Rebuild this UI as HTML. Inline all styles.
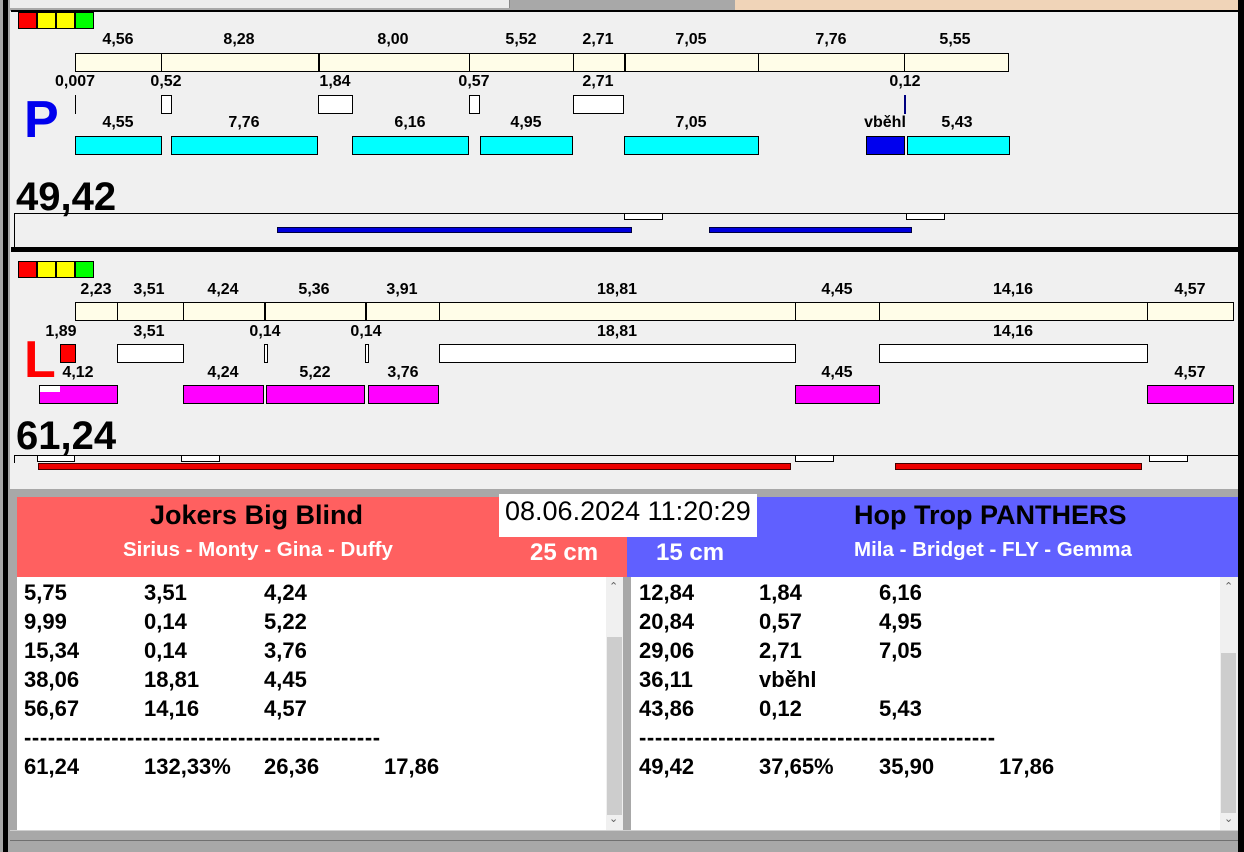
<!DOCTYPE html>
<html><head><meta charset="utf-8"><style>
*{margin:0;padding:0;box-sizing:border-box}
body{width:1244px;height:852px;background:#f0f0f0;position:relative;overflow:hidden;font-family:"Liberation Sans",Arial,sans-serif}
div{position:absolute}
.b{border:1px solid #000}
.c{background:#fffde8}.w{background:#fff}.cy{background:#00ffff}.m{background:#ff00ff}
.t{font-weight:bold;font-size:16px;transform:translateX(-50%);white-space:nowrap;line-height:16px}
.r{font-weight:bold;font-size:22px;line-height:22px;white-space:nowrap}
.d{letter-spacing:0.6px}
</style></head><body>
<!-- top strip -->
<div style="left:0;top:0;width:1244px;height:11px;background:#a8a8a8"></div>
<div style="left:8px;top:0;width:502px;height:8px;background:#ececec;border-right:1px solid #888"></div>
<div style="left:735px;top:0;width:509px;height:11px;background:#f0d4b8"></div>
<div style="left:0;top:0;width:10px;height:852px;background:#a8a8a8"></div>
<div style="left:3px;top:0;width:5px;height:852px;background:#000"></div>
<div style="left:1238px;top:0;width:6px;height:852px;background:#000"></div>
<div style="left:11px;top:10px;width:1227px;height:2px;background:#000"></div>
<!-- P panel -->
<div style="left:18px;top:12px;width:19px;height:17px;background:#f00;border:1px solid #000"></div>
<div style="left:37px;top:12px;width:19px;height:17px;background:#ff0;border:1px solid #000"></div>
<div style="left:56px;top:12px;width:19px;height:17px;background:#ff0;border:1px solid #000"></div>
<div style="left:75px;top:12px;width:19px;height:17px;background:#0f0;border:1px solid #000"></div>

<div class="b c" style="left:75px;top:53px;width:87px;height:19px"></div>
<div class="b c" style="left:161px;top:53px;width:158px;height:19px"></div>
<div class="b c" style="left:318px;top:53px;width:152px;height:19px;border-left-width:2px"></div>
<div class="b c" style="left:469px;top:53px;width:105px;height:19px"></div>
<div class="b c" style="left:573px;top:53px;width:52px;height:19px"></div>
<div class="b c" style="left:624px;top:53px;width:135px;height:19px;border-left-width:2px"></div>
<div class="b c" style="left:758px;top:53px;width:147px;height:19px"></div>
<div class="b c" style="left:904px;top:53px;width:105px;height:19px"></div>
<div class="t" style="left:118px;top:32px">4,56</div>
<div class="t" style="left:239px;top:32px">8,28</div>
<div class="t" style="left:393px;top:32px">8,00</div>
<div class="t" style="left:521px;top:32px">5,52</div>
<div class="t" style="left:598px;top:32px">2,71</div>
<div class="t" style="left:691px;top:32px">7,05</div>
<div class="t" style="left:831px;top:32px">7,76</div>
<div class="t" style="left:955px;top:32px">5,55</div>

<div style="left:75px;top:95px;width:1px;height:19px;background:#000"></div>
<div class="b w" style="left:161px;top:95px;width:11px;height:19px"></div>
<div class="b w" style="left:318px;top:95px;width:35px;height:19px"></div>
<div class="b w" style="left:469px;top:95px;width:11px;height:19px"></div>
<div class="b w" style="left:573px;top:95px;width:51px;height:19px"></div>
<div style="left:904px;top:95px;width:2px;height:19px;background:#000080"></div>
<div class="t" style="left:75px;top:74px">0,007</div>
<div class="t" style="left:166px;top:74px">0,52</div>
<div class="t" style="left:335px;top:74px">1,84</div>
<div class="t" style="left:474px;top:74px">0,57</div>
<div class="t" style="left:598px;top:74px">2,71</div>
<div class="t" style="left:905px;top:74px">0,12</div>

<div class="b cy" style="left:75px;top:136px;width:87px;height:19px"></div>
<div class="b cy" style="left:171px;top:136px;width:147px;height:19px"></div>
<div class="b cy" style="left:352px;top:136px;width:117px;height:19px"></div>
<div class="b cy" style="left:480px;top:136px;width:93px;height:19px"></div>
<div class="b cy" style="left:624px;top:136px;width:135px;height:19px"></div>
<div class="b" style="left:866px;top:136px;width:39px;height:19px;background:#0000ee"></div>
<div class="b cy" style="left:907px;top:136px;width:103px;height:19px"></div>
<div class="t" style="left:118px;top:115px">4,55</div>
<div class="t" style="left:244px;top:115px">7,76</div>
<div class="t" style="left:410px;top:115px">6,16</div>
<div class="t" style="left:526px;top:115px">4,95</div>
<div class="t" style="left:691px;top:115px">7,05</div>
<div class="t" style="left:885px;top:115px">vběhl</div>
<div class="t" style="left:957px;top:115px">5,43</div>

<div style="left:24px;top:92px;font-size:52px;font-weight:bold;color:#0000ee;line-height:56px">P</div>
<div style="left:16px;top:175px;font-size:40px;font-weight:bold;line-height:44px">49,42</div>
<div style="left:14px;top:213px;width:1224px;height:1px;background:#000"></div>
<div style="left:14px;top:213px;width:1px;height:34px;background:#000"></div>
<div class="b w" style="left:624px;top:213px;width:39px;height:7px"></div>
<div class="b w" style="left:906px;top:213px;width:39px;height:7px"></div>
<div style="left:277px;top:227px;width:355px;height:6px;background:#0000dd;border:1px solid #000040"></div>
<div style="left:709px;top:227px;width:203px;height:6px;background:#0000dd;border:1px solid #000040"></div>
<div style="left:11px;top:247px;width:1227px;height:5px;background:#000"></div>

<!-- L panel -->
<div style="left:18px;top:261px;width:19px;height:17px;background:#f00;border:1px solid #000"></div>
<div style="left:37px;top:261px;width:19px;height:17px;background:#ff0;border:1px solid #000"></div>
<div style="left:56px;top:261px;width:19px;height:17px;background:#ff0;border:1px solid #000"></div>
<div style="left:75px;top:261px;width:19px;height:17px;background:#0f0;border:1px solid #000"></div>

<div class="b c" style="left:75px;top:302px;width:43px;height:19px"></div>
<div class="b c" style="left:117px;top:302px;width:67px;height:19px"></div>
<div class="b c" style="left:183px;top:302px;width:82px;height:19px"></div>
<div class="b c" style="left:264px;top:302px;width:102px;height:19px;border-left-width:2px"></div>
<div class="b c" style="left:365px;top:302px;width:75px;height:19px;border-left-width:2px"></div>
<div class="b c" style="left:439px;top:302px;width:357px;height:19px"></div>
<div class="b c" style="left:795px;top:302px;width:85px;height:19px"></div>
<div class="b c" style="left:879px;top:302px;width:269px;height:19px"></div>
<div class="b c" style="left:1147px;top:302px;width:87px;height:19px"></div>
<div class="t" style="left:96px;top:282px">2,23</div>
<div class="t" style="left:149px;top:282px">3,51</div>
<div class="t" style="left:223px;top:282px">4,24</div>
<div class="t" style="left:314px;top:282px">5,36</div>
<div class="t" style="left:402px;top:282px">3,91</div>
<div class="t" style="left:617px;top:282px">18,81</div>
<div class="t" style="left:837px;top:282px">4,45</div>
<div class="t" style="left:1013px;top:282px">14,16</div>
<div class="t" style="left:1190px;top:282px">4,57</div>

<div class="b" style="left:60px;top:344px;width:16px;height:19px;background:#f00"></div>
<div class="b w" style="left:117px;top:344px;width:67px;height:19px"></div>
<div class="b w" style="left:264px;top:344px;width:4px;height:19px"></div>
<div class="b w" style="left:365px;top:344px;width:4px;height:19px"></div>
<div class="b w" style="left:439px;top:344px;width:357px;height:19px"></div>
<div class="b w" style="left:879px;top:344px;width:269px;height:19px"></div>
<div class="t" style="left:61px;top:324px">1,89</div>
<div class="t" style="left:149px;top:324px">3,51</div>
<div class="t" style="left:265px;top:324px">0,14</div>
<div class="t" style="left:366px;top:324px">0,14</div>
<div class="t" style="left:617px;top:324px">18,81</div>
<div class="t" style="left:1013px;top:324px">14,16</div>

<div class="b m" style="left:39px;top:385px;width:79px;height:19px"></div>
<div style="left:40px;top:386px;width:20px;height:6px;background:#fff"></div>
<div class="b m" style="left:183px;top:385px;width:81px;height:19px"></div>
<div class="b m" style="left:266px;top:385px;width:99px;height:19px"></div>
<div class="b m" style="left:368px;top:385px;width:71px;height:19px"></div>
<div class="b m" style="left:795px;top:385px;width:85px;height:19px"></div>
<div class="b m" style="left:1147px;top:385px;width:87px;height:19px"></div>
<div style="left:24px;top:334px;font-size:52px;font-weight:bold;color:#f00;line-height:52px">L</div>
<div class="t" style="left:78px;top:365px">4,12</div>
<div class="t" style="left:223px;top:365px">4,24</div>
<div class="t" style="left:315px;top:365px">5,22</div>
<div class="t" style="left:403px;top:365px">3,76</div>
<div class="t" style="left:837px;top:365px">4,45</div>
<div class="t" style="left:1190px;top:365px">4,57</div>

<div style="left:16px;top:414px;font-size:40px;font-weight:bold;line-height:44px">61,24</div>
<div style="left:14px;top:455px;width:1224px;height:1px;background:#000"></div>
<div style="left:14px;top:455px;width:1px;height:8px;background:#000"></div>
<div class="b w" style="left:37px;top:455px;width:38px;height:7px"></div>
<div class="b w" style="left:181px;top:455px;width:39px;height:7px"></div>
<div class="b w" style="left:795px;top:455px;width:39px;height:7px"></div>
<div class="b w" style="left:1149px;top:455px;width:39px;height:7px"></div>
<div style="left:38px;top:463px;width:753px;height:7px;background:#e00;border:1px solid #400"></div>
<div style="left:895px;top:463px;width:247px;height:7px;background:#e00;border:1px solid #400"></div>
<div style="left:10px;top:489px;width:1228px;height:8px;background:#a8a8a8"></div>

<!-- bottom -->
<div style="left:10px;top:497px;width:7px;height:355px;background:#a8a8a8"></div>
<div style="left:17px;top:497px;width:610px;height:80px;background:#ff6060"></div>
<div style="left:627px;top:497px;width:611px;height:80px;background:#6060ff"></div>
<div style="left:150px;top:500px;font-size:27px;font-weight:bold;line-height:30px">Jokers Big Blind</div>
<div style="left:123px;top:538px;font-size:20.5px;font-weight:bold;color:#fff;line-height:23px">Sirius - Monty - Gina - Duffy</div>
<div style="left:854px;top:500px;font-size:27px;font-weight:bold;line-height:30px">Hop Trop PANTHERS</div>
<div style="left:854px;top:538px;font-size:20.5px;font-weight:bold;color:#fff;line-height:23px">Mila - Bridget - FLY - Gemma</div>
<div style="left:530px;top:539px;font-size:24px;font-weight:bold;color:#fff;line-height:27px">25 cm</div>
<div style="left:656px;top:539px;font-size:24px;font-weight:bold;color:#fff;line-height:27px">15 cm</div>
<div style="left:499px;top:494px;width:258px;height:43px;background:#fff"></div>
<div style="left:505px;top:496px;font-size:27px;line-height:30px">08.06.2024 11:20:29</div>

<div style="left:17px;top:577px;width:589px;height:253px;background:#fff"></div>
<div style="left:606px;top:577px;width:17px;height:253px;background:#f0f0f0"></div>
<div style="left:607px;top:637px;width:15px;height:178px;background:#cdcdcd"></div>
<div style="left:609px;top:580px;font-size:11px;color:#606060">&#8963;</div>
<div style="left:609px;top:812px;font-size:11px;color:#606060">&#8964;</div>
<div style="left:623px;top:577px;width:8px;height:253px;background:#a8a8a8"></div>
<div style="left:631px;top:577px;width:589px;height:253px;background:#fff"></div>
<div style="left:1220px;top:577px;width:18px;height:253px;background:#f0f0f0"></div>
<div style="left:1221px;top:653px;width:15px;height:160px;background:#cdcdcd"></div>
<div style="left:1224px;top:580px;font-size:11px;color:#606060">&#8963;</div>
<div style="left:1224px;top:812px;font-size:11px;color:#606060">&#8964;</div>
<div style="left:10px;top:830px;width:1228px;height:22px;background:#a8a8a8;border-top:1px solid #d0d0d0"></div>
<div style="left:10px;top:840px;width:1228px;height:1px;background:#707070"></div>

<div class="r" style="left:24px;top:582px">5,75</div><div class="r" style="left:144px;top:582px">3,51</div><div class="r" style="left:264px;top:582px">4,24</div>
<div class="r" style="left:24px;top:611px">9,99</div><div class="r" style="left:144px;top:611px">0,14</div><div class="r" style="left:264px;top:611px">5,22</div>
<div class="r" style="left:24px;top:640px">15,34</div><div class="r" style="left:144px;top:640px">0,14</div><div class="r" style="left:264px;top:640px">3,76</div>
<div class="r" style="left:24px;top:669px">38,06</div><div class="r" style="left:144px;top:669px">18,81</div><div class="r" style="left:264px;top:669px">4,45</div>
<div class="r" style="left:24px;top:698px">56,67</div><div class="r" style="left:144px;top:698px">14,16</div><div class="r" style="left:264px;top:698px">4,57</div>
<div class="r d" style="left:24px;top:727px">---------------------------------------------</div>
<div class="r" style="left:24px;top:756px">61,24</div><div class="r" style="left:144px;top:756px">132,33%</div><div class="r" style="left:264px;top:756px">26,36</div><div class="r" style="left:384px;top:756px">17,86</div>

<div class="r" style="left:639px;top:582px">12,84</div><div class="r" style="left:759px;top:582px">1,84</div><div class="r" style="left:879px;top:582px">6,16</div>
<div class="r" style="left:639px;top:611px">20,84</div><div class="r" style="left:759px;top:611px">0,57</div><div class="r" style="left:879px;top:611px">4,95</div>
<div class="r" style="left:639px;top:640px">29,06</div><div class="r" style="left:759px;top:640px">2,71</div><div class="r" style="left:879px;top:640px">7,05</div>
<div class="r" style="left:639px;top:669px">36,11</div><div class="r" style="left:759px;top:669px">vběhl</div>
<div class="r" style="left:639px;top:698px">43,86</div><div class="r" style="left:759px;top:698px">0,12</div><div class="r" style="left:879px;top:698px">5,43</div>
<div class="r d" style="left:639px;top:727px">---------------------------------------------</div>
<div class="r" style="left:639px;top:756px">49,42</div><div class="r" style="left:759px;top:756px">37,65%</div><div class="r" style="left:879px;top:756px">35,90</div><div class="r" style="left:999px;top:756px">17,86</div>
</body></html>
